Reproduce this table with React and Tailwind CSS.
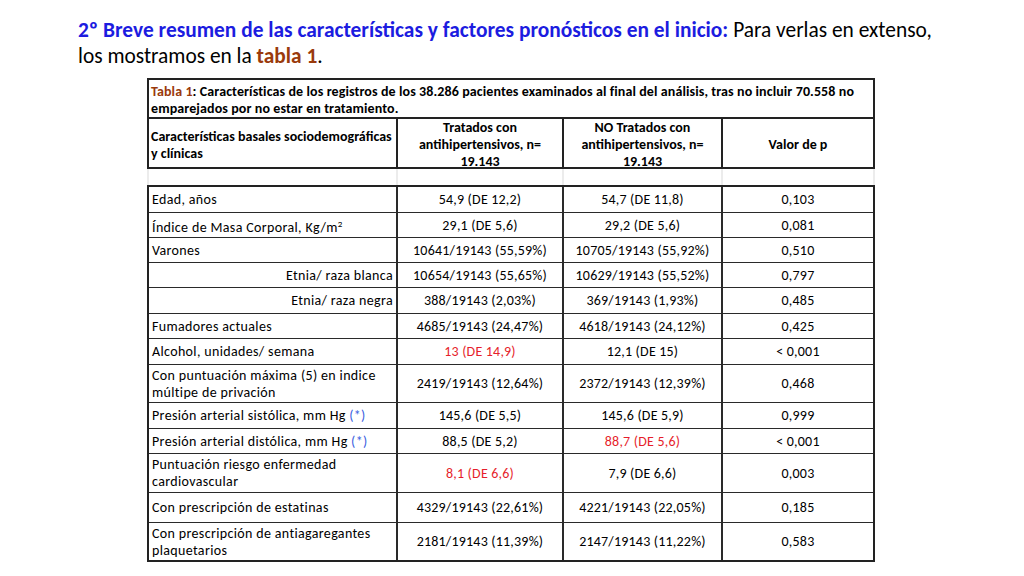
const COLS = 'grid grid-cols-[249px_166px_159px_150px]'

const ROWS = [
  { h: 'h-[26px]', label: 'Edad, años', a: '54,9 (DE 12,2)', b: '54,7 (DE 11,8)', p: '0,103' },
  { h: 'h-[25px]', label: <>Índice de Masa Corporal, Kg/m<span className="align-[5px] text-[9px]">2</span></>, a: '29,1 (DE 5,6)', b: '29,2 (DE 5,6)', p: '0,081' },
  { h: 'h-[25px]', label: 'Varones', a: '10641/19143 (55,59%)', b: '10705/19143 (55,92%)', p: '0,510' },
  { h: 'h-[25px]', label: 'Etnia/ raza blanca', right: true, a: '10654/19143 (55,65%)', b: '10629/19143 (55,52%)', p: '0,797' },
  { h: 'h-[26px]', label: 'Etnia/ raza negra', right: true, a: '388/19143 (2,03%)', b: '369/19143 (1,93%)', p: '0,485' },
  { h: 'h-[25px]', label: 'Fumadores actuales', a: '4685/19143 (24,47%)', b: '4618/19143 (24,12%)', p: '0,425' },
  { h: 'h-[26px]', label: 'Alcohol, unidades/ semana', a: '13 (DE 14,9)', aRed: true, b: '12,1 (DE 15)', p: '< 0,001' },
  { h: 'h-[38px]', label: <>Con puntuación máxima (5) en indice<br />múltipe de privación</>, a: '2419/19143 (12,64%)', b: '2372/19143 (12,39%)', p: '0,468' },
  { h: 'h-[26px]', label: <>Presión arterial sistólica, mm Hg <span className="text-[#3a5ee0]">(*)</span></>, a: '145,6 (DE 5,5)', b: '145,6 (DE 5,9)', p: '0,999' },
  { h: 'h-[25px]', label: <>Presión arterial distólica, mm Hg <span className="text-[#3a5ee0]">(*)</span></>, a: '88,5 (DE 5,2)', b: '88,7 (DE 5,6)', bRed: true, p: '< 0,001' },
  { h: 'h-[39px]', label: <>Puntuación riesgo enfermedad<br />cardiovascular</>, a: '8,1 (DE 6,6)', aRed: true, b: '7,9 (DE 6,6)', p: '0,003' },
  { h: 'h-[30px]', label: 'Con prescripción de estatinas', a: '4329/19143 (22,61%)', b: '4221/19143 (22,05%)', p: '0,185' },
  { h: 'h-[37px]', label: <>Con prescripción de antiagaregantes<br />plaquetarios</>, a: '2181/19143 (11,39%)', b: '2147/19143 (11,22%)', p: '0,583', last: true },
]

function BodyRow({ row }) {
  const line = row.last ? '' : 'border-b border-[#2a2a2a]'
  return (
    <div className={`${COLS} ${row.h} ${line}`}>
      <div className={`flex items-center border-r-2 border-[#2a2a2a] px-[3px] tracking-[0.35px] leading-[17px] ${row.right ? 'justify-end' : ''}`}>
        <span>{row.label}</span>
      </div>
      <div className={`flex items-center justify-center border-r-2 border-[#2a2a2a] tracking-[0.2px] ${row.aRed ? 'text-[#e61e2b]' : ''}`}>{row.a}</div>
      <div className={`flex items-center justify-center border-r-2 border-[#2a2a2a] tracking-[0.2px] ${row.bRed ? 'text-[#e61e2b]' : ''}`}>{row.b}</div>
      <div className="flex items-center justify-center tracking-[0.2px]">{row.p}</div>
    </div>
  )
}

export default function App() {
  return (
    <div className="w-[1024px] h-[576px] bg-white overflow-hidden font-['Carlito','Liberation_Sans',sans-serif] text-black">
      <h1 className="pl-[78px] pt-[17px] text-[21.4px] leading-[26px]">
        <span className="font-bold text-[#1c1ce0]">2º Breve resumen de las características y factores pronósticos en el inicio:</span>
        {' '}Para verlas en extenso,<br />
        los mostramos en la <span className="font-bold text-[#9a3a0c]">tabla 1</span>.
      </h1>

      <div className="ml-[147px] mt-[9px] w-[728px]">
        {/* Caption + header */}
        <div className="border-2 border-[#222] font-bold">
          <div className="h-[39px] border-b-2 border-[#222] px-[2px] pt-[3px] text-[14px] leading-[17px] tracking-[0.1px]">
            <span className="text-[#9a3a0c]">Tabla 1</span>: Características de los registros de los 38.286 pacientes examinados al final del análisis, tras no incluir 70.558 no emparejados por no estar en tratamiento.
          </div>
          <div className={`${COLS} h-[48px] text-[14px] leading-[17px]`}>
            <div className="flex items-center border-r-2 border-[#222] px-[2px]">
              <span>Características basales sociodemográficas<br />y clínicas</span>
            </div>
            <div className="flex items-center justify-center border-r-2 border-[#222] text-center">
              <span>Tratados con<br />antihipertensivos, n=<br />19.143</span>
            </div>
            <div className="flex items-center justify-center border-r-2 border-[#222] text-center">
              <span>NO Tratados con<br />antihipertensivos, n=<br />19.143</span>
            </div>
            <div className="flex items-center justify-center">Valor de p</div>
          </div>
        </div>

        {/* Empty spacer row */}
        <div className={`${COLS} h-[16px] border-x-2 border-[#ececec]`}>
          <div className="border-r-2 border-[#ececec]" />
          <div className="border-r-2 border-[#ececec]" />
          <div className="border-r-2 border-[#ececec]" />
          <div />
        </div>

        {/* Body */}
        <div className="border-2 border-[#222] text-[14px]">
          {ROWS.map((row, i) => <BodyRow key={i} row={row} />)}
        </div>
      </div>
    </div>
  )
}
